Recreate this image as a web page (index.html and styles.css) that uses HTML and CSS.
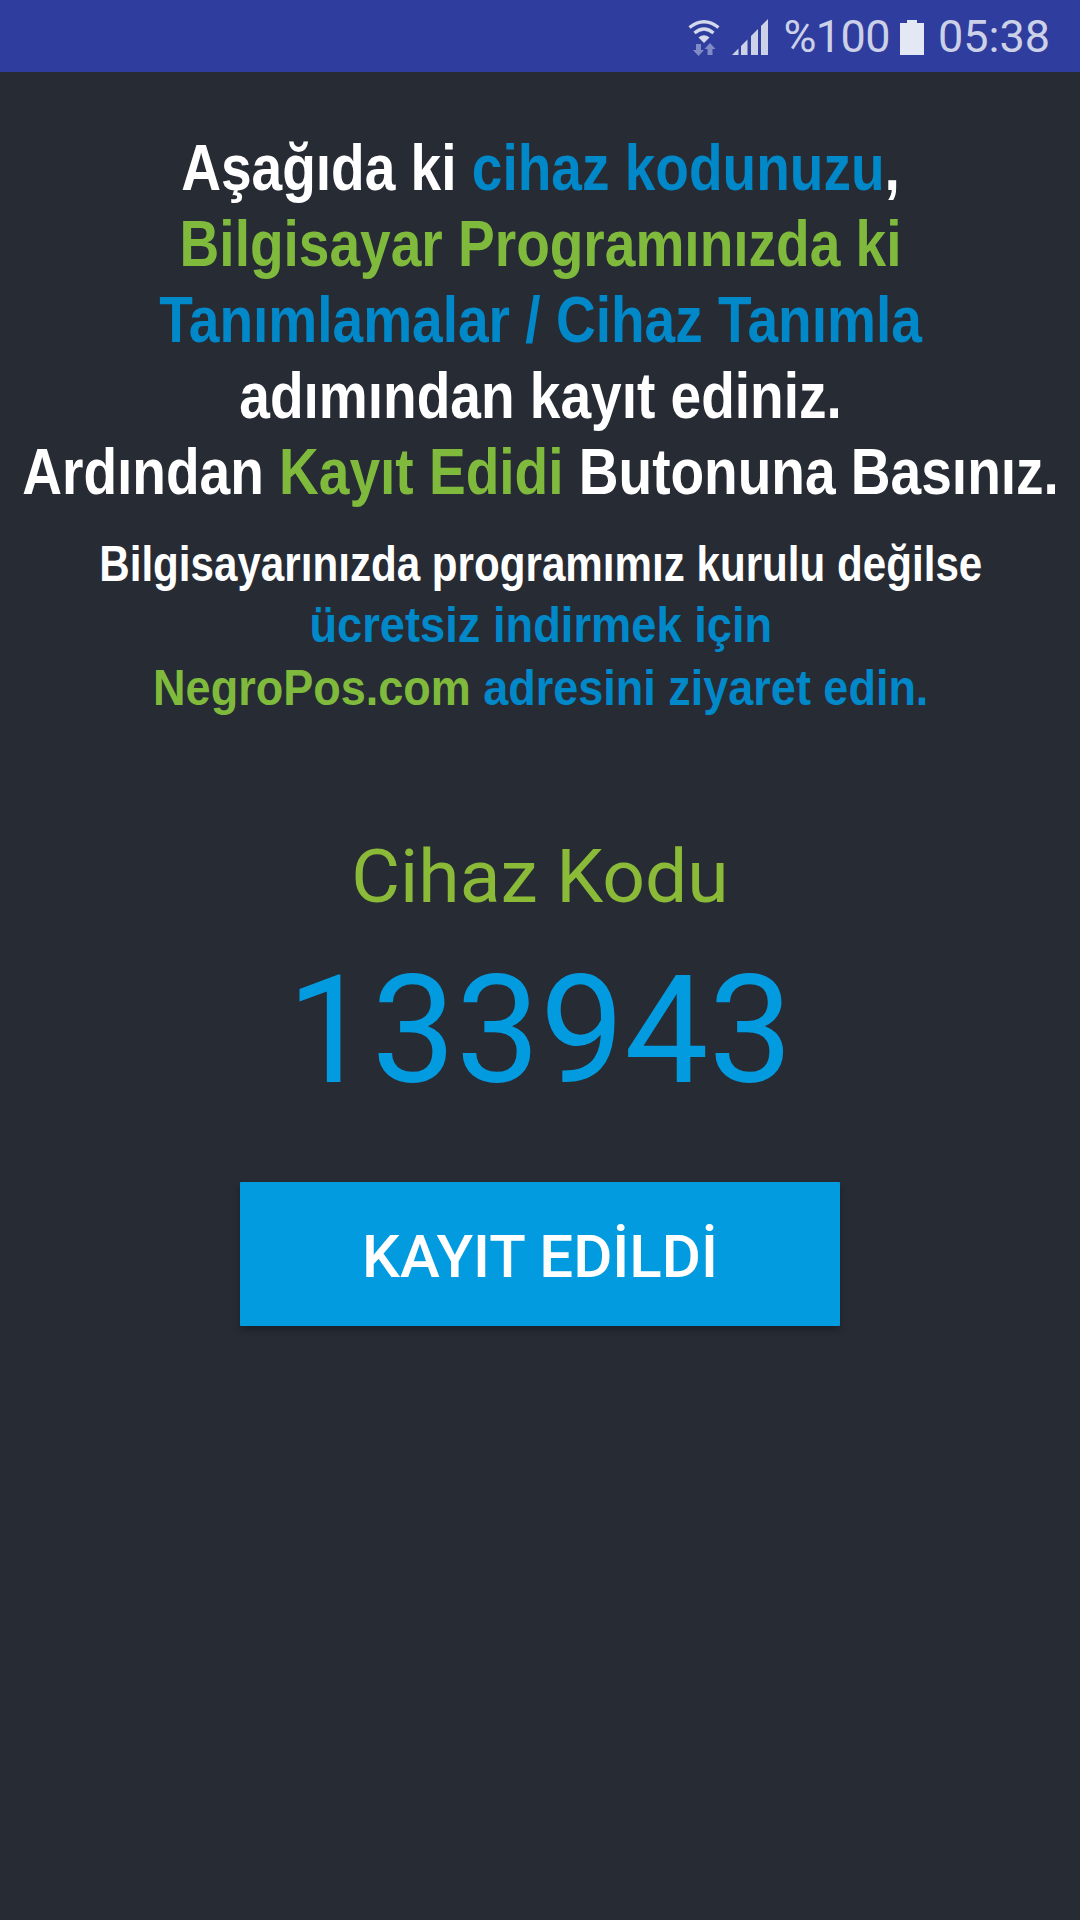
FILE: index.html
```html
<!DOCTYPE html>
<html lang="tr">

<head>
  <meta charset="UTF-8" />
  <title>Cihaz Kodu</title>
  <link rel="stylesheet" href="styles.css">
</head>

<body>
  <div class="status-bar">
    <svg class="wifi" width="32" height="37" viewBox="0 0 32 37">
      <path d="M1.500 8.500Q16-3 30.500 8.500" fill="none" stroke="#d5d9ec" stroke-width="3.200" />
      <path d="M6.500 14Q16 6 25.500 14" fill="none" stroke="#d5d9ec" stroke-width="3.200" />
      <path d="M10.500 18.500Q16 14 21.500 18.500L16 24z" fill="#d5d9ec" />
      <path d="M8 25h5v6h3l-5.500 6L5 31h3z" fill="#7f8ac6" />
      <path d="M22 24l5.500 6h-3v6h-5v-6h-3z" fill="#7f8ac6" />
    </svg>
    <svg class="signal" width="36" height="36" viewBox="0 0 36 36">
      <path d="M0 36l6.500-6.500V36z" fill="#ccd1e8" />
      <path d="M9 36V27l6.500-6.500V36z" fill="#ccd1e8" />
      <path d="M19 36V17l7-7v26z" fill="#ccd1e8" />
      <path d="M29 36V7l7-7v36z" fill="#ccd1e8" />
    </svg>
    <span class="sb-text sb-pct">%100</span>
    <svg class="battery" width="24" height="35" viewBox="0 0 24 35">
      <path d="M7 0h10v3h7v32H0V3h7z" fill="#e4e7f4" />
    </svg>
    <span class="sb-text sb-time">05:38</span>
  </div>

  <div class="content">
    <div class="intro">
      <p><span class="white">Aşağıda ki</span> <span class="blue">cihaz kodunuzu</span><span class="white">,</span></p>
      <p class="green">Bilgisayar Programınızda ki</p>
      <p class="blue">Tanımlamalar / Cihaz Tanımla</p>
      <p class="white">adımından kayıt ediniz.</p>
      <p class="white">Ardından <span class="green">Kayıt Edidi</span> Butonuna Basınız.</p>
    </div>
    <div class="intro-small">
      <p class="white small-1">Bilgisayarınızda programımız kurulu değilse</p>
      <p class="blue small-2">ücretsiz indirmek için</p>
      <p class="small-3"><span class="green">NegroPos.com</span> <span class="blue">adresini ziyaret edin.</span></p>
    </div>
    <div class="code-label">Cihaz Kodu</div>
    <div class="code-value">133943</div>
    <button class="save-btn">KAYIT EDİLDİ</button>
  </div>
</body>

</html>
```

FILE: styles.css
```css
* {
  box-sizing: border-box;
}

html,
body {
  margin: 0;
  padding: 0;
}

body {
  width: 1080px;
  height: 1920px;
  background-color: #272b34;
  overflow: hidden;
}

p {
  margin: 0;
}

.status-bar {
  display: flex;
  align-items: center;
  justify-content: flex-end;
  height: 72px;
  padding: 2px 30px 0 0;
  background-color: #2f3e9e;
}

.sb-text {
  font-family: Roboto, sans-serif;
  font-size: 45px;
  line-height: 50px;
  color: #ccd1e8;
}

.sb-pct {
  letter-spacing: -0.6px;
}

.wifi {
  margin-right: 12px;
}

.signal {
  margin-right: 16px;
}

.battery {
  margin: 0 14px 0 10px;
}

.content {
  display: flex;
  flex-direction: column;
  align-items: center;
}

.intro,
.intro-small {
  font-family: "Liberation Sans", sans-serif;
  font-weight: bold;
  text-align: center;
  white-space: nowrap;
}

.intro {
  margin-top: 58px;
  padding-left: 2px;
  font-size: 64px;
  line-height: 76px;
  transform: scaleX(0.86);
}

.intro-small {
  margin-top: 23px;
  padding-left: 1px;
  font-size: 50px;
  line-height: 62.500px;
}

.small-1 {
  transform: scaleX(0.843);
}

.small-2 {
  margin-top: -2px;
  transform: scaleX(0.905);
}

.small-3 {
  margin-top: 1px;
  transform: scaleX(0.9);
}

.white {
  color: #fff;
}

.green {
  color: #7fba3c;
}

.blue {
  color: #0088c9;
}

.code-label {
  margin-top: 112px;
  font-family: Roboto, sans-serif;
  font-size: 75px;
  line-height: 88px;
  color: #8aba38;
}

.code-value {
  margin-top: 24px;
  font-family: Roboto, sans-serif;
  font-size: 150px;
  line-height: 175px;
  color: #039be0;
}

.save-btn {
  width: 600px;
  height: 144px;
  margin-top: 63px;
  padding-top: 6px;
  border: 0;
  border-radius: 1px;
  background-color: #039be0;
  box-shadow: 0 4px 6px rgba(0, 0, 0, 0.25);
  font-family: Roboto, sans-serif;
  font-size: 60px;
  font-weight: 500;
  color: #fff;
}
```
